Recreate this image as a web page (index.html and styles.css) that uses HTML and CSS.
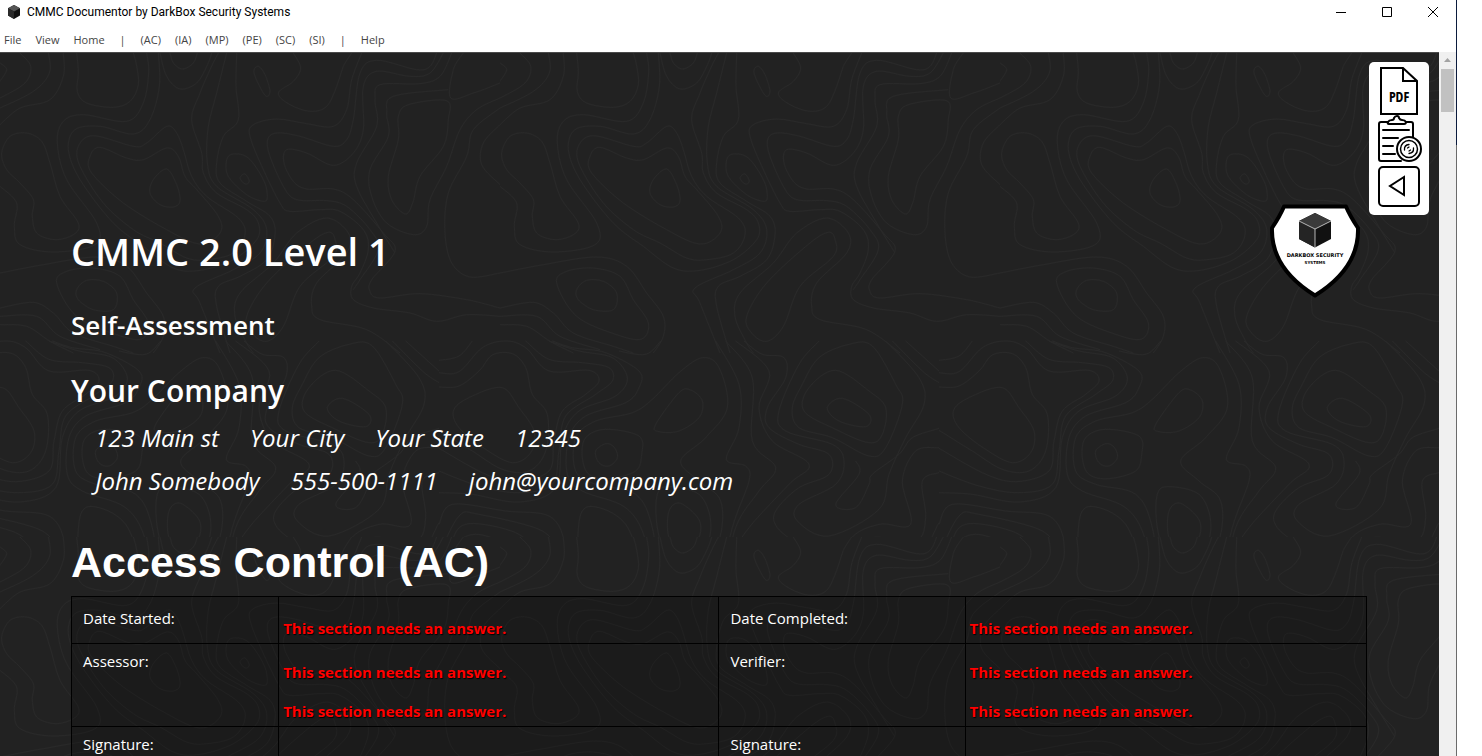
FILE: index.html
```html
<!DOCTYPE html>
<html lang="en">
<head>
<meta charset="utf-8">
<title>CMMC Documentor by DarkBox Security Systems</title>
<link rel="stylesheet" href="styles.css">
</head>
<body>
<div class="window">
  <header class="titlebar">
    <svg class="app-icon" viewBox="0 0 14 14" aria-hidden="true">
      <path d="M7 0 13 3.2v7.4L7 14 1 10.6V3.2z" fill="#111"/>
      <path d="M7 0 13 3.2 7 6.5 1 3.2z" fill="#555"/>
      <path d="M1 3.2 7 6.5V14L1 10.6z" fill="#2b2b2b"/>
    </svg>
    <span class="app-title">CMMC Documentor by DarkBox Security Systems</span>
    <div class="window-controls">
      <button type="button" aria-label="Minimize"><svg viewBox="0 0 12 12"><path d="M1 6.500H11"/></svg></button>
      <button type="button" aria-label="Maximize"><svg viewBox="0 0 12 12"><path d="M1.500 1.500h9v9h-9z"/></svg></button>
      <button type="button" aria-label="Close"><svg viewBox="0 0 12 12"><path d="M1 1 11 11M11 1 1 11"/></svg></button>
    </div>
  </header>
  <nav class="menubar" aria-label="Main menu">
    <button type="button">File</button>
    <button type="button">View</button>
    <button type="button">Home</button>
    <span class="divider">|</span>
    <button type="button">(AC)</button>
    <button type="button">(IA)</button>
    <button type="button">(MP)</button>
    <button type="button">(PE)</button>
    <button type="button">(SC)</button>
    <button type="button">(SI)</button>
    <span class="divider">|</span>
    <button type="button">Help</button>
  </nav>
  <div class="viewport">
    <main class="page">
      <svg class="contours" aria-hidden="true">
        <defs>
          <g id="upper"></g>
          <g id="lower"></g>
          <pattern id="topo" width="1500" height="1452" patternUnits="userSpaceOnUse" patternTransform="scale(0.33333)">
            <use href="#upper"/>
            <use href="#lower" x="-183" y="864"/>
            <use href="#lower" x="1317" y="864"/>
          </pattern>
        </defs>
        <rect width="100%" height="100%" fill="url(#topo)"/>
      </svg>

      <div class="document">
        <div class="heading-row">
          <h1>CMMC 2.0 Level 1</h1>
          <svg class="shield" viewBox="0 0 90 94" role="img" aria-label="DarkBox Security Systems">
            <path d="M14 2.500H76Q80 12 88 24C89 54 70 76 45 91.500C20 76 1 54 2 24Q10 12 14 2.500z" fill="#fff" stroke="#000" stroke-width="4" stroke-linejoin="round"/>
            <path d="M45 9 61 17V35L45 43.500 29 35V17z" fill="#111"/>
            <path d="M45 9 61 17 45 25 29 17z" fill="#3a3a3a"/>
            <path d="M29 17 45 25V43.500L29 35z" fill="#242424"/>
            <path d="M29 17 45 25 61 17M45 25V43.500" fill="none" stroke="#ddd" stroke-width=".8"/>
            <text class="shield-text" x="45" y="53">DARKBOX SECURITY</text>
            <text class="shield-text small" x="45" y="60">SYSTEMS</text>
          </svg>
        </div>
        <h2 class="kind">Self-Assessment</h2>
        <h2 class="company">Your Company</h2>
        <address>
          <div class="line place"><span>123 Main st</span><span>Your City</span><span>Your State</span><span>12345</span></div>
          <div class="line contact"><span>John Somebody</span><span>555-500-1111</span><span>john@yourcompany.com</span></div>
        </address>
        <h2 class="section">Access Control (AC)</h2>
        <table>
          <colgroup><col class="c1"><col class="c2"><col class="c3"><col class="c4"></colgroup>
          <tbody>
            <tr class="first">
              <th scope="row">Date Started:</th>
              <td><p>This section needs an answer.</p></td>
              <th scope="row">Date Completed:</th>
              <td><p>This section needs an answer.</p></td>
            </tr>
            <tr>
              <th scope="row">Assessor:</th>
              <td><p>This section needs an answer.</p><p>This section needs an answer.</p></td>
              <th scope="row">Verifier:</th>
              <td><p>This section needs an answer.</p><p>This section needs an answer.</p></td>
            </tr>
            <tr>
              <th scope="row">Signature:</th>
              <td></td>
              <th scope="row">Signature:</th>
              <td></td>
            </tr>
          </tbody>
        </table>
      </div>

      <div class="tools">
        <button type="button" aria-label="Export PDF">
          <svg width="44" height="50" viewBox="0 0 44 50">
            <path d="M4 2H26L40 15V48H4z" fill="#fff" stroke="#000" stroke-width="2"/>
            <path d="M26 2V15H40" fill="none" stroke="#000" stroke-width="2"/>
            <text class="pdf-text" x="22" y="36">PDF</text>
          </svg>
        </button>
        <button type="button" aria-label="Assessment report">
          <svg width="44" height="50" viewBox="0 0 44 50" fill="none" stroke="#000" stroke-width="2" stroke-linecap="round">
            <path d="M11 6H4Q2 6 2 8V43Q2 45 4 45H24M29 6H34Q36 6 36 8V22"/>
            <path d="M12 8Q10 8 11 6Q12 4 15 4Q17 4 17 2Q18 0 20 0Q22 0 22 2Q23 4 25 4Q28 4 29 6Q29 8 27 8z"/>
            <path d="M6 14H32M6 22H21M6 30H16M6 38H18"/>
            <circle cx="32" cy="33" r="12" fill="#fff"/>
            <circle cx="32" cy="33" r="8.500" stroke-width="1.500"/>
            <path d="M27.500 34Q27 29 32 28.500M36.500 32Q37 37 32 37.500M30.500 32 32 31M32 35 33.500 34" stroke-width="1.300"/>
          </svg>
        </button>
        <button type="button" aria-label="Back">
          <svg width="44" height="43" viewBox="0 0 44 43" fill="none" stroke="#000" stroke-width="2">
            <rect x="2" y="1" width="40" height="39" rx="4"/>
            <path d="M27 11V29L13 20z"/>
          </svg>
        </button>
      </div>
    </main>
    <div class="scrollbar" aria-hidden="true">
      <div class="arrow"></div>
      <div class="thumb"></div>
    </div>
  </div>
</div>
<div class="edge"></div>
<script src="contours.js"></script>
</body>
</html>
```
FILE: styles.css
```css
* { box-sizing: border-box; }
body {
  margin: 0;
  height: 100vh;
  display: flex;
  padding-right: 25px;
  overflow: hidden;
  background: #fff;
  font-family: "Open Sans", "Noto Sans", sans-serif;
}
h1, h2, p { margin: 0; }
button {
  font: inherit;
  color: inherit;
  background: none;
  border: 0;
  padding: 0;
}
.window {
  flex: 1;
  min-width: 0;
  display: flex;
  flex-direction: column;
}
.edge {
  width: 1px;
  background: linear-gradient(#0b1b3d 145px, #6b6b6b 145px);
}

.titlebar {
  display: flex;
  align-items: center;
  height: 24px;
  padding-left: 7px;
  gap: 6px;
  font-family: Roboto, "Open Sans", sans-serif;
  font-size: 12px;
  color: #000;
}
.app-icon { width: 14px; height: 14px; }
.app-title { flex: 1; }
.window-controls { display: flex; }
.window-controls button {
  width: 46px;
  height: 24px;
  display: grid;
  place-items: center;
}
.window-controls svg {
  width: 12px;
  height: 12px;
  fill: none;
  stroke: #000;
}

.menubar {
  display: flex;
  align-items: center;
  gap: 14px;
  height: 28px;
  padding: 2px 0 0 4px;
  font-size: 11px;
  color: #444;
}
.divider { padding: 0 1px; }

.viewport {
  flex: 1;
  min-height: 0;
  display: flex;
}
.page {
  position: relative;
  flex: 1;
  overflow: hidden;
  background: #222;
  border-top: 1px solid #4a4a4a;
  color: #fff;
}
.contours {
  position: absolute;
  inset: 0;
  width: 100%;
  height: 100%;
}
.contours path {
  fill: none;
  stroke: #292929;
  stroke-width: 3;
}
.document {
  position: relative;
  padding: 151px 72px 0 71px;
}
.heading-row {
  display: flex;
  justify-content: space-between;
  align-items: center;
  padding-right: 7px;
}
.shield { width: 90px; height: 94px; }
.shield-text {
  font: bold 5px "DejaVu Sans", sans-serif;
  text-anchor: middle;
  fill: #000;
}
.shield-text.small { font-size: 4px; }
h1 {
  font-size: 38px;
  line-height: 52px;
  font-weight: 600;
}
.kind {
  margin-top: 7px;
  font-size: 26px;
  line-height: 40px;
  font-weight: 600;
}
.company {
  margin-top: 24px;
  font-size: 30px;
  line-height: 44px;
  font-weight: 600;
}
address {
  margin-top: 3px;
  font-size: 24px;
  line-height: 43px;
}
.line {
  display: flex;
  gap: 31px;
  padding-left: 24px;
}
.section {
  margin-top: 35px;
  font: bold 43px/50px "Liberation Sans", Arial, sans-serif;
}
table {
  width: 100%;
  margin-top: 9px;
  table-layout: fixed;
  border-collapse: collapse;
  background: rgba(0, 0, 0, .2);
  font-size: 15px;
  line-height: 20px;
}
.c1 { width: 16%; }
.c2 { width: 34%; }
.c3 { width: 19%; }
.c4 { width: 31%; }
th, td {
  border: 1px solid #000;
  vertical-align: top;
  text-align: left;
}
th {
  padding: 7px 11px;
  font-weight: 400;
}
td {
  padding: 18px 4px 5px;
  font-weight: 700;
  color: #f00;
  text-shadow: 1px 1px 1px #000;
}
.first th { padding-top: 11px; }
.first td { padding-top: 21px; }
td p + p { margin-top: 19px; }

.tools {
  position: absolute;
  top: 9px;
  right: 10px;
  display: flex;
  flex-direction: column;
  align-items: center;
  padding: 4px 8px 6px;
  border-radius: 5px;
  background: #fff;
}
.tools svg { display: block; overflow: visible; }
.pdf-text {
  font: 600 14px "Open Sans Condensed", "DejaVu Sans Condensed", sans-serif;
  text-anchor: middle;
  fill: #000;
}

.scrollbar {
  width: 17px;
  padding: 6px 2px 0;
  background: #f0f0f0;
}
.arrow {
  width: 7px;
  height: 4px;
  margin: 0 auto 7px;
  background: #a3a3a3;
  clip-path: polygon(50% 0, 100% 100%, 0 100%);
}
.thumb {
  height: 43px;
  background: #c1c1c1;
}
```
FILE: contours.js
```js
// Contour lines of the page background. A trailing "z" closes the loop.
const lines = {
  upper: [
    "230,0 235,60 232,115 260,150 340,163 390,145 415,95 410,40 400,0",
    "480,0 500,70 540,108 590,90 620,40 635,0",
    "510,0 520,30 548,48 580,30 592,0",
    "0,30 20,50 0,85",
    "60,0 92,40 75,90 0,135",
    "145,0 148,60 100,115 0,165",
    "190,0 190,70 150,140 60,165 0,215",
    "440,0 446,60 430,150 380,205 250,185 190,205 172,270 200,380 290,510 285,575 160,597 60,575 43,520 50,450 0,400",
    "475,0 478,100 450,200 400,243 300,220 225,230 205,290 240,380 340,510 430,580 520,645 600,652 700,620 770,560 775,510 740,470 650,420 610,360 605,300 575,200 600,120 630,50 655,0",
    "500,220 440,270 400,280 280,248 235,280 240,340 310,450 400,530 480,570 560,615 620,620 700,600 735,545 715,495 620,430 575,370 550,290 530,240 z",
    "500,285 430,320 380,315 300,283 270,310 275,360 370,450 500,530 600,573 660,540 655,490 590,410 555,370 535,310 z",
    "500,348 460,380 450,420 480,455 520,462 540,445 530,395 z",
    "5,300 30,250 80,240 125,265 150,330 180,430 235,510 220,545 165,560 110,540 97,490 100,440 60,390 20,350 z",
    "700,303 680,320 685,370 740,425 790,445 802,430 790,380 745,315 z",
    "735,363 720,375 735,393 748,385 z",
    "775,40 762,60 795,127 810,115 795,65 z",
    "880,0 902,45 880,85 835,120 870,155 930,175 980,160 1010,100 1030,40 1055,0",
    "710,0 708,100 715,200 670,250 650,330 660,390 740,445 810,490 825,545 800,620 720,670 655,700 650,760 690,900",
    "680,0 650,120 625,220 622,330 650,400 760,470 800,530 780,600 700,650 585,705 600,750 660,900",
    "1085,0 1055,80 1040,170 1000,220 920,212 830,198 760,215 750,250 790,350 840,450 870,475 960,470 1020,475 1090,530 1105,590 1080,660 1055,700 1060,740 1120,765 1230,780 1310,805 1400,785 1500,790",
    "1310,0 1290,40 1250,50 1130,22 1080,60 1060,200 1040,260 1000,280 900,250 830,240 803,260 810,310 850,400 890,440 980,443 1040,460 1110,530 1135,590 1080,680 1060,710",
    "1330,0 1290,60 1230,70 1130,55 1090,100 1090,230 1060,300 1000,337 920,300 860,290 852,330 880,385 920,408 1000,408 1060,440 1150,540 1185,595 1115,680 1110,715 1140,735 1260,722 1400,740 1500,765",
    "1355,0 1320,70 1260,92 1140,95 1125,140 1130,220 1070,330 1070,400 1130,510 1185,600",
    "1345,110 1180,130 1160,180 1165,250 1110,350 1115,430 1160,510 1240,545 1280,520 1290,440 1340,340 1380,230 1430,170 1500,135",
    "1340,143 1225,155 1195,190 1195,260 1165,370 1175,440 1215,483 1238,450 1260,370 1330,280 1345,200 z",
    "1390,0 1360,50 1352,135 1420,120 1500,90",
    "1500,165 1420,230 1400,310 1345,420 1335,540 1355,630 1410,672 1500,660",
    "1500,215 1450,270 1445,335 1500,395",
    "985,538 930,570 800,690 740,790 755,840 800,865 850,820 900,700 1000,610 1005,560 z",
    "760,900 740,870 705,790 720,720 820,630 890,540 980,495 1045,540 1040,600 950,690 935,760 960,800 1100,830 1200,900",
    "0,660 130,635 290,612 380,640 440,720 490,790 490,850 460,900",
    "170,690 200,655 280,645 360,670 400,740 445,810 425,858 350,845 230,790 z",
    "230,710 260,682 310,685 350,720 340,770 280,770 235,740 z",
    "0,765 100,748 160,780 220,840 340,880 400,900",
    "0,790 110,790 180,850 300,890",
    "0,815 80,820 150,865 220,900"
  ],
  lower: [
    "190,140 100,165 45,205 60,260 140,325 220,365 275,335 285,270 240,200 z",
    "0,138 60,135 120,90 160,42 220,38 260,80 280,160 325,220 320,330 270,390 190,385 100,330 0,268",
    "0,95 60,92 130,20 200,0 260,20 330,90 450,88 480,120 440,160 370,210 345,300 330,390 230,422 130,395 0,322",
    "0,58 60,45 100,0",
    "260,0 330,55 430,65 510,80 520,120 470,160 380,225 360,330 340,430 240,455 120,435 0,390",
    "330,0 420,30 520,50 565,110 530,165 420,210 370,290 350,440 240,483 100,460 0,455",
    "340,0 400,20 500,35 600,90 600,140 560,185 440,225 390,290 385,400 430,450 560,500 620,600 635,750",
    "540,30 620,40 665,0",
    "500,265 440,290 430,350 450,400 510,413 590,390 608,340 600,285 z",
    "500,308 470,330 480,365 510,375 535,350 525,318 z",
    "660,750 640,560 590,460 470,430 410,390 410,290 470,240 580,215 640,175 720,95 790,50 840,80 865,200 800,290 725,360 780,420 845,480 840,600 770,750",
    "755,147 720,155 650,250 660,272 720,270 780,230 790,180 z",
    "690,437 655,460 655,560 690,680 740,690 800,620 815,540 780,460 z",
    "725,487 690,510 690,590 730,637 775,600 782,540 z",
    "830,0 900,130 900,260 862,355 920,375 930,420 880,560 840,750",
    "860,0 940,110 940,300 1010,380 960,450 890,560 850,750",
    "890,0 990,90 960,200 1000,300 1110,370 1050,430 930,560 890,640 900,750",
    "915,0 970,40 1035,50 1040,110 985,200 990,260 1080,310 1170,340 1170,400 1080,440 1010,510 1015,560 1080,620 1070,660 1015,710 1040,750",
    "1140,0 1080,70 1020,210 1040,270 1180,310 1215,360 1190,430 1080,490 1075,540 1170,585 1320,505 1350,400 1400,290 1455,190 1440,110 1340,0",
    "1230,10 1140,50 1090,130 1060,200 1080,260 1180,290 1290,345 1340,320 1390,190 1370,130 1300,15 z",
    "1190,88 1110,140 1095,210 1190,265 1290,305 1330,280 1340,200 1290,150 z",
    "1210,172 1165,200 1200,240 1280,257 1290,220 z",
    "1360,0 1450,90 1500,125",
    "1400,0 1500,90",
    "1250,360 1260,400 1190,490 1250,500 1290,430 1300,400 1380,340 1420,290 1500,262",
    "1500,320 1430,330 1390,420 1415,550 1320,550 1230,600 1180,750",
    "1500,395 1450,420 1460,530 1430,600 1300,590 1240,650 1210,750",
    "1500,545 1430,650 1300,610 1260,660 1245,750",
    "0,550 40,490 200,510 330,525 375,600 360,690 290,750",
    "0,640 60,525 120,520 310,570 330,640 200,750",
    "110,580 55,610 35,720 130,700 200,650 185,605 z",
    "35,720 40,600 90,548 230,575 275,630 220,690 130,750",
    "420,750 415,680 425,520 480,500 560,550 600,660 590,720 560,750"
  ]
};

// Catmull-Rom spline through the points, as cubic Bezier segments.
function spline(text) {
  const parts = text.split(" ");
  const closed = parts[parts.length - 1] === "z";
  if (closed) parts.pop();
  const p = parts.map(s => s.split(",").map(Number));
  const n = p.length;
  const at = i => closed ? p[(i + n) % n] : p[Math.max(0, Math.min(n - 1, i))];
  let d = "M" + p[0];
  for (let i = 0; i < (closed ? n : n - 1); i++) {
    const [a, b, c, e] = [at(i - 1), at(i), at(i + 1), at(i + 2)];
    d += "C" + [b[0] + (c[0] - a[0]) / 6, b[1] + (c[1] - a[1]) / 6,
      c[0] - (e[0] - b[0]) / 6, c[1] - (e[1] - b[1]) / 6, c[0], c[1]].map(Math.round);
  }
  return d;
}

for (const id in lines) {
  const group = document.getElementById(id);
  for (const line of lines[id]) {
    const path = document.createElementNS("http://www.w3.org/2000/svg", "path");
    path.setAttribute("d", spline(line));
    group.appendChild(path);
  }
}
```
